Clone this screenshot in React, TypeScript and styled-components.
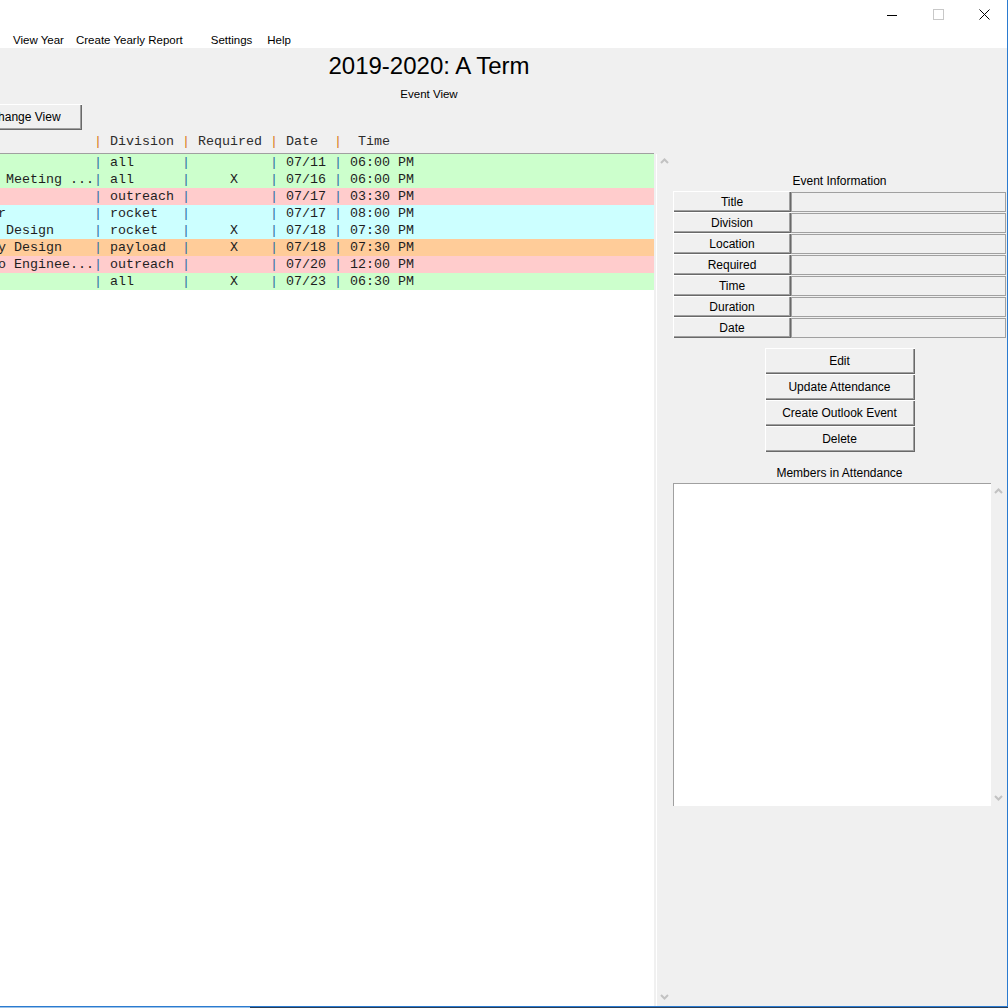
import styled, { createGlobalStyle } from 'styled-components';

type EventRow = {
    title: string;
    division: string;
    required: boolean;
    date: string;
    time: string;
    color: string;
};

const rows: EventRow[] = [
    { title: '', division: 'all', required: false, date: '07/11', time: '06:00 PM', color: '#ccffcc' },
    { title: ' Meeting ...', division: 'all', required: true, date: '07/16', time: '06:00 PM', color: '#ccffcc' },
    { title: '', division: 'outreach', required: false, date: '07/17', time: '03:30 PM', color: '#ffcccc' },
    { title: 'r', division: 'rocket', required: false, date: '07/17', time: '08:00 PM', color: '#ccffff' },
    { title: ' Design', division: 'rocket', required: true, date: '07/18', time: '07:30 PM', color: '#ccffff' },
    { title: 'y Design', division: 'payload', required: true, date: '07/18', time: '07:30 PM', color: '#ffcc99' },
    { title: 'o Enginee...', division: 'outreach', required: false, date: '07/20', time: '12:00 PM', color: '#ffcccc' },
    { title: '', division: 'all', required: true, date: '07/23', time: '06:30 PM', color: '#ccffcc' },
];

const infoFields = ['Title', 'Division', 'Location', 'Required', 'Time', 'Duration', 'Date'];
const actions = ['Edit', 'Update Attendance', 'Create Outlook Event', 'Delete'];

const Chevron = ({ down }: { down?: boolean }) => (
    <svg width="9" height="6" viewBox="0 0 9 6">
        <polyline
            points={down ? '1,1 4.5,4.5 8,1' : '1,5 4.5,1.5 8,5'}
            fill="none"
            stroke="#c2c2c2"
            strokeWidth="2"
        />
    </svg>
);

const App: React.FC = () => {
    return (
        <>
            <GlobalStyle />
            <StyledWindow>
                <StyledTitleBar>
                    <StyledCtrlButton>
                        <svg width="10" height="10" viewBox="0 0 10 10">
                            <line x1="0" y1="5.5" x2="10" y2="5.5" stroke="#000" strokeWidth="1" />
                        </svg>
                    </StyledCtrlButton>
                    <StyledCtrlButton>
                        <svg width="11" height="11" viewBox="0 0 11 11">
                            <rect x="0.5" y="0.5" width="10" height="10" fill="none" stroke="#c8c8c8" strokeWidth="1" />
                        </svg>
                    </StyledCtrlButton>
                    <StyledCtrlButton>
                        <svg width="11" height="11" viewBox="0 0 11 11">
                            <path d="M0.5 0.5 L10.5 10.5 M10.5 0.5 L0.5 10.5" stroke="#000" strokeWidth="1" />
                        </svg>
                    </StyledCtrlButton>
                </StyledTitleBar>
                <StyledMenuBar>
                    <StyledMenuItem $after={0}>View Year</StyledMenuItem>
                    <StyledMenuItem $after={16}>Create Yearly Report</StyledMenuItem>
                    <StyledMenuItem $after={3}>Settings</StyledMenuItem>
                    <StyledMenuItem $after={0}>Help</StyledMenuItem>
                </StyledMenuBar>
                <StyledMain>
                    <StyledHeading>
                        <StyledTitle>2019-2020: A Term</StyledTitle>
                        <StyledSubtitle>Event View</StyledSubtitle>
                    </StyledHeading>
                    <StyledChangeViewButton>Change View</StyledChangeViewButton>
                    <StyledBody>
                        <StyledLeftColumn>
                            <StyledColumnHeader>
                                {'            '}
                                <StyledPipe $header>|</StyledPipe>
                                {' Division '}
                                <StyledPipe $header>|</StyledPipe>
                                {' Required '}
                                <StyledPipe $header>|</StyledPipe>
                                {' Date  '}
                                <StyledPipe $header>|</StyledPipe>
                                {'  Time'}
                            </StyledColumnHeader>
                            <StyledListArea>
                                {rows.map((row, index) => (
                                    <StyledRow key={index} $bg={row.color}>
                                        {row.title.padEnd(12)}
                                        <StyledPipe>|</StyledPipe>
                                        {' ' + row.division.padEnd(9)}
                                        <StyledPipe>|</StyledPipe>
                                        {row.required ? '     X    ' : '          '}
                                        <StyledPipe>|</StyledPipe>
                                        {' ' + row.date + ' '}
                                        <StyledPipe>|</StyledPipe>
                                        {' ' + row.time}
                                    </StyledRow>
                                ))}
                            </StyledListArea>
                        </StyledLeftColumn>
                        <StyledScrollCol>
                            <Chevron />
                            <Chevron down />
                        </StyledScrollCol>
                        <StyledRightPanel>
                            <StyledSectionLabel>Event Information</StyledSectionLabel>
                            <StyledInfoGrid>
                                {infoFields.map((field) => [
                                    <StyledInfoLabel key={field}>{field}</StyledInfoLabel>,
                                    <StyledInfoValue key={field + '-v'} />,
                                ])}
                            </StyledInfoGrid>
                            <StyledButtonStack>
                                {actions.map((item) => (
                                    <StyledActionButton key={item}>{item}</StyledActionButton>
                                ))}
                            </StyledButtonStack>
                            <StyledMembersLabel>Members in Attendance</StyledMembersLabel>
                            <StyledMembersBox>
                                <StyledMembersList />
                                <StyledMembersScroll>
                                    <Chevron />
                                    <Chevron down />
                                </StyledMembersScroll>
                            </StyledMembersBox>
                        </StyledRightPanel>
                    </StyledBody>
                </StyledMain>
            </StyledWindow>
        </>
    );
};

const GlobalStyle = createGlobalStyle`
    html, body {
        margin: 0;
        padding: 0;
        overflow: hidden;
        background: linear-gradient(to right, #9cc2e8 0, #9cc2e8 250px, #2a3d55 250px);
        font-family: "Liberation Sans", Arial, sans-serif;
    }
`;

const raised = `
    background-color: #f0f0f0;
    box-shadow: inset 1px 1px #ffffff, inset -1px -1px #696969, inset -2px -2px #a0a0a0;
`;

const StyledWindow = styled.div`
    width: 1007px;
    height: 1006px;
    border-right: 1px solid #2b7bd0;
    border-bottom: 1px solid #2b7bd0;
    background-color: #f0f0f0;
    display: flex;
    flex-direction: column;
    overflow: hidden;
`;

const StyledTitleBar = styled.div`
    height: 29px;
    background-color: #ffffff;
    display: flex;
    justify-content: flex-end;
`;

const StyledCtrlButton = styled.div`
    width: 46px;
    height: 29px;
    display: flex;
    align-items: center;
    justify-content: center;
`;

const StyledMenuBar = styled.div`
    height: 19px;
    box-sizing: border-box;
    padding-top: 2px;
    background-color: #ffffff;
    display: flex;
    align-items: center;
    padding-left: 7px;
    font-size: 11.5px;
    color: #000;
`;

const StyledMenuItem = styled.div<{ $after: number }>`
    padding: 0 6px;
    margin-right: ${(p) => p.$after}px;
    white-space: nowrap;
`;

const StyledMain = styled.div`
    flex: 1;
    display: flex;
    flex-direction: column;
    min-height: 0;
`;

const StyledHeading = styled.div`
    width: 858px;
    text-align: center;
`;

const StyledTitle = styled.div`
    font-size: 24px;
    line-height: 28px;
    padding-top: 4px;
    color: #000;
`;

const StyledSubtitle = styled.div`
    font-size: 11.5px;
    line-height: 16px;
    margin-top: 6px;
    color: #000;
`;

const StyledChangeViewButton = styled.div`
    ${raised}
    margin-top: 2px;
    margin-left: -32px;
    width: 114px;
    height: 26px;
    display: flex;
    align-items: center;
    justify-content: center;
    font-size: 12px;
    color: #000;
`;

const StyledBody = styled.div`
    flex: 1;
    display: flex;
    margin-top: 3px;
    min-height: 0;
`;

const StyledLeftColumn = styled.div`
    width: 654px;
    display: flex;
    flex-direction: column;
`;

const StyledColumnHeader = styled.div`
    height: 20px;
    line-height: 17px;
    font-family: "Liberation Mono", "Courier New", monospace;
    font-size: 13.33px;
    color: #2c2c2c;
    white-space: pre;
    text-indent: -2px;
`;

const StyledPipe = styled.span<{ $header?: boolean }>`
    color: ${(p) => (p.$header ? '#d9791c' : '#2e6da4')};
`;

const StyledListArea = styled.div`
    flex: 1;
    background-color: #ffffff;
    border-top: 1px solid #a0a0a0;
`;

const StyledRow = styled.div<{ $bg: string }>`
    height: 17px;
    line-height: 17px;
    background-color: ${(p) => p.$bg};
    font-family: "Liberation Mono", "Courier New", monospace;
    font-size: 13.33px;
    color: #1e1e1e;
    white-space: pre;
    text-indent: -2px;
    overflow: hidden;
`;

const StyledScrollCol = styled.div`
    width: 15px;
    margin-left: 2px;
    margin-top: 21px;
    border-left: 1px solid #ffffff;
    display: flex;
    flex-direction: column;
    justify-content: space-between;
    align-items: center;
    padding: 4px 0 6px;
`;

const StyledRightPanel = styled.div`
    flex: 1;
    display: flex;
    flex-direction: column;
    padding: 40px 1px 0 1px;
    font-size: 12px;
    color: #000;
`;

const StyledSectionLabel = styled.div`
    text-align: center;
    line-height: 16px;
`;

const StyledInfoGrid = styled.div`
    display: grid;
    grid-template-columns: 118px 1fr;
    grid-auto-rows: 21px;
    margin-top: 2px;
`;

const StyledInfoLabel = styled.div`
    ${raised}
    display: flex;
    align-items: center;
    justify-content: center;
`;

const StyledInfoValue = styled.div`
    margin-top: 1px;
    border: 1px solid #a0a0a0;
    background-color: #f0f0f0;
`;

const StyledButtonStack = styled.div`
    display: flex;
    flex-direction: column;
    align-items: center;
    margin-top: 10px;
`;

const StyledActionButton = styled.div`
    ${raised}
    width: 150px;
    height: 26px;
    display: flex;
    align-items: center;
    justify-content: center;
`;

const StyledMembersLabel = styled.div`
    text-align: center;
    line-height: 16px;
    margin-top: 13px;
`;

const StyledMembersBox = styled.div`
    display: flex;
    height: 323px;
    margin-top: 2px;
`;

const StyledMembersList = styled.div`
    flex: 1;
    background-color: #ffffff;
    border-top: 1px solid #a0a0a0;
    border-left: 1px solid #a0a0a0;
`;

const StyledMembersScroll = styled.div`
    width: 15px;
    display: flex;
    flex-direction: column;
    justify-content: space-between;
    align-items: center;
    padding: 5px 0;
`;

export default App;
